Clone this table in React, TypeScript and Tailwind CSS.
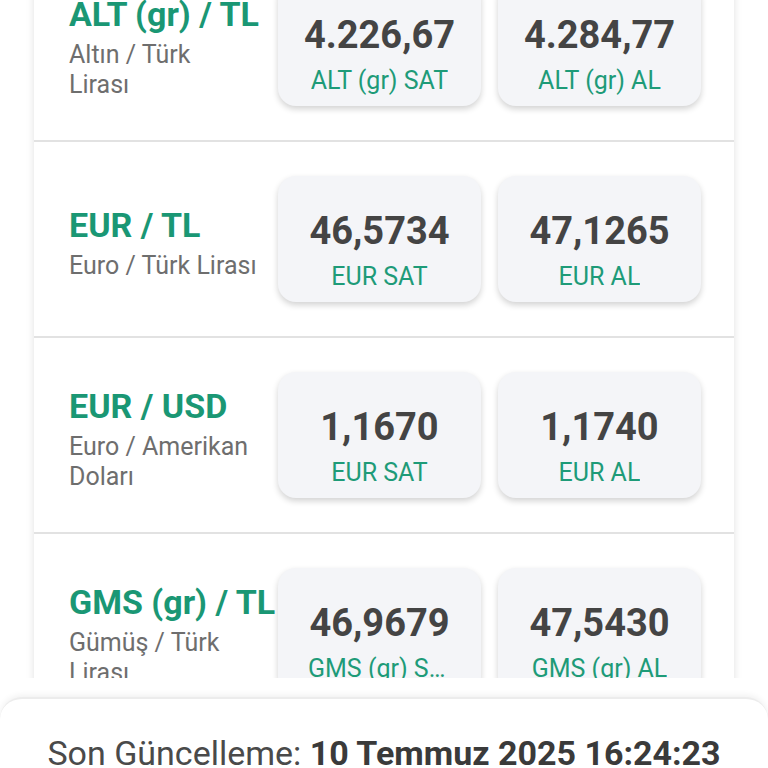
import React from "react";

interface Rate {
  code: string;
  name: string[];
  sell: string;
  buy: string;
  sellLabel: string;
  buyLabel: string;
}

const rates: Rate[] = [
  { code: "ALT (gr) / TL", name: ["Altın / Türk", "Lirası"], sell: "4.226,67", buy: "4.284,77", sellLabel: "ALT (gr) SAT", buyLabel: "ALT (gr) AL" },
  { code: "EUR / TL", name: ["Euro / Türk Lirası"], sell: "46,5734", buy: "47,1265", sellLabel: "EUR SAT", buyLabel: "EUR AL" },
  { code: "EUR / USD", name: ["Euro / Amerikan", "Doları"], sell: "1,1670", buy: "1,1740", sellLabel: "EUR SAT", buyLabel: "EUR AL" },
  { code: "GMS (gr) / TL", name: ["Gümüş / Türk", "Lirası"], sell: "46,9679", buy: "47,5430", sellLabel: "GMS (gr) SAT", buyLabel: "GMS (gr) AL" },
];

const PriceBox = ({ value, label }: { value: string; label: string }) => (
  <div className="w-[203px] h-[126px] shrink-0 rounded-[18px] bg-[#f4f5f8] shadow-[0_3px_6px_rgba(0,0,0,0.18)] flex flex-col items-center pt-[32px] px-[30px]">
    <div className="text-[38px] leading-[46px] font-bold text-[#444444] whitespace-nowrap">{value}</div>
    <div className="mt-[8px] text-[25px] leading-[30px] text-[#1e9b78] max-w-full truncate">{label}</div>
  </div>
);

const App = () => {
  return (
    <div
      className="w-[768px] h-[768px] overflow-hidden bg-white flex flex-col"
      style={{ fontFamily: "Roboto, 'Noto Sans', sans-serif" }}
    >
      <div className="h-[678px] shrink-0 overflow-hidden">
        <div className="mt-[-54px] mx-[34px] bg-white shadow-[0_0_8px_rgba(0,0,0,0.12)]">
          {rates.map((r) => (
            <div
              key={r.code}
              className="h-[196px] flex items-center border-b-2 border-[#e2e2e2] pl-[35px] pr-[34px]"
            >
              <div className="w-[209px] shrink-0 pt-[6px]">
                <div className="text-[34px] leading-[44px] font-bold text-[#1a9774] whitespace-nowrap">{r.code}</div>
                <div className="text-[25px] leading-[30px] text-[#6e6e6e] mt-[4px]">
                  {r.name.map((line) => (
                    <div key={line}>{line}</div>
                  ))}
                </div>
              </div>
              <div className="flex gap-[17px]">
                <PriceBox value={r.sell} label={r.sellLabel} />
                <PriceBox value={r.buy} label={r.buyLabel} />
              </div>
            </div>
          ))}
        </div>
      </div>
      <div className="mt-[19px] flex-1 rounded-t-[22px] border-t-2 border-[#ececec] bg-white shadow-[0_-2px_6px_rgba(0,0,0,0.06)] flex justify-center pt-[34px]">
        <div className="text-[34px] leading-[40px] text-[#4a4a4a] whitespace-nowrap">
          Son Güncelleme: <span className="font-bold text-[#3a3a3a]">10 Temmuz 2025 16:24:23</span>
        </div>
      </div>
    </div>
  );
};

export default App;
